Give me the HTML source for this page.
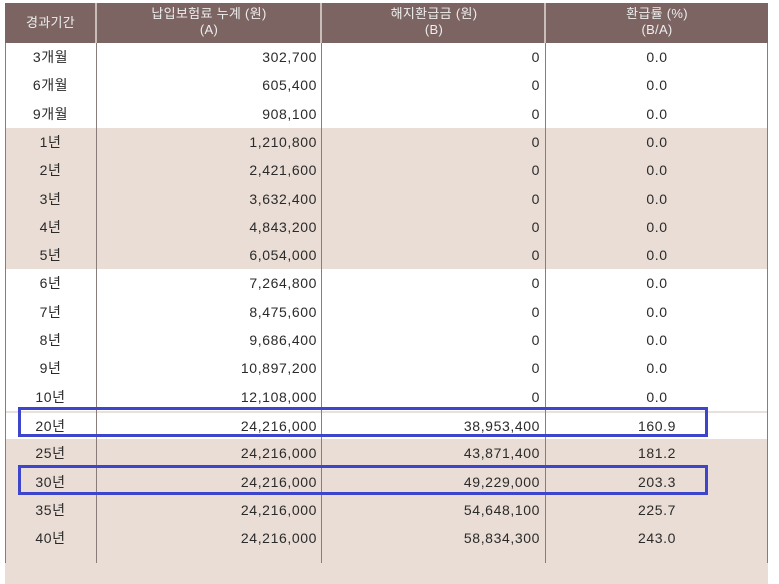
<!DOCTYPE html>
<html><head><meta charset="utf-8"><style>
body{margin:0;width:779px;height:552px;overflow:hidden;background:#fff;font-family:"Liberation Sans","Noto Sans CJK KR",sans-serif;font-size:14px;color:#2a2a2a}
.t{position:absolute;left:5px;top:3px;width:763px}
.h{position:absolute;left:0;top:0;width:763px;height:40px;background:#7b6462;color:#eee}
.h div{position:absolute;top:0;height:40px;text-align:center;line-height:16px;font-size:13px;letter-spacing:0.3px}
.r{position:absolute;left:0;width:763px;line-height:28px}
.r span{position:absolute;top:0;letter-spacing:0.6px}
.c1{left:0;width:91px;text-align:center}
.c2{right:451px;text-align:right}
.c3{right:228px;text-align:right}
.c4{left:541px;width:222px;text-align:center}
.b{background:#eaddd5}
.v{position:absolute;top:40px;width:1px;height:520px;background:#8a7c78}
.hv{position:absolute;top:0;width:2px;height:40px;background:#c9bdb9}
.box{position:absolute;border:3px solid #3d45cc;box-sizing:border-box}
</style></head><body>
<div class="t">
<div class="h">
<div style="left:0;width:91px;line-height:40px">경과기간</div>
<div style="left:92px;width:224px;top:3px">납입보험료 누계 (원)<br>(A)</div>
<div style="left:317px;width:224px;top:3px">해지환급금 (원)<br>(B)</div>
<div style="left:541px;width:222px;top:3px">환급률 (%)<br>(B/A)</div>
<div class="hv" style="left:90px"></div><div class="hv" style="left:315px"></div><div class="hv" style="left:539px"></div>
</div>
<div id="rows"></div>
<div class="v" style="left:0"></div><div class="v" style="left:91px"></div><div class="v" style="left:316px"></div><div class="v" style="left:540px"></div><div class="v" style="left:762px"></div>
</div>
<div class="box" style="left:18px;top:407px;width:690px;height:30px"></div>
<div class="box" style="left:18px;top:465px;width:690px;height:30px"></div>
<script>
var d=[["3개월","302,700","0","0.0",0],["6개월","605,400","0","0.0",0],["9개월","908,100","0","0.0",0],
["1년","1,210,800","0","0.0",1],["2년","2,421,600","0","0.0",1],["3년","3,632,400","0","0.0",1],["4년","4,843,200","0","0.0",1],["5년","6,054,000","0","0.0",1],
["6년","7,264,800","0","0.0",0],["7년","8,475,600","0","0.0",0],["8년","9,686,400","0","0.0",0],["9년","10,897,200","0","0.0",0],["10년","12,108,000","0","0.0",0],
["20년","24,216,000","38,953,400","160.9",0],["25년","24,216,000","43,871,400","181.2",1],["30년","24,216,000","49,229,000","203.3",1],["35년","24,216,000","54,648,100","225.7",1],["40년","24,216,000","58,834,300","243.0",1]];
var h="";d.forEach(function(r,i){var t=Math.round(40+i*28.3),n=Math.round(40+(i+1)*28.3);var hh=(i==17?60:n-t);
h+='<div class="r'+(r[4]?' b':'')+'" style="top:'+t+'px;height:'+hh+'px'+(i==13?';border-top:2px solid #e8e0dc;box-sizing:border-box;line-height:26px':'')+'"><span class="c1">'+r[0]+'</span><span class="c2">'+r[1]+'</span><span class="c3">'+r[2]+'</span><span class="c4">'+r[3]+'</span></div>';});
document.getElementById("rows").innerHTML=h;
</script>
</body></html>
